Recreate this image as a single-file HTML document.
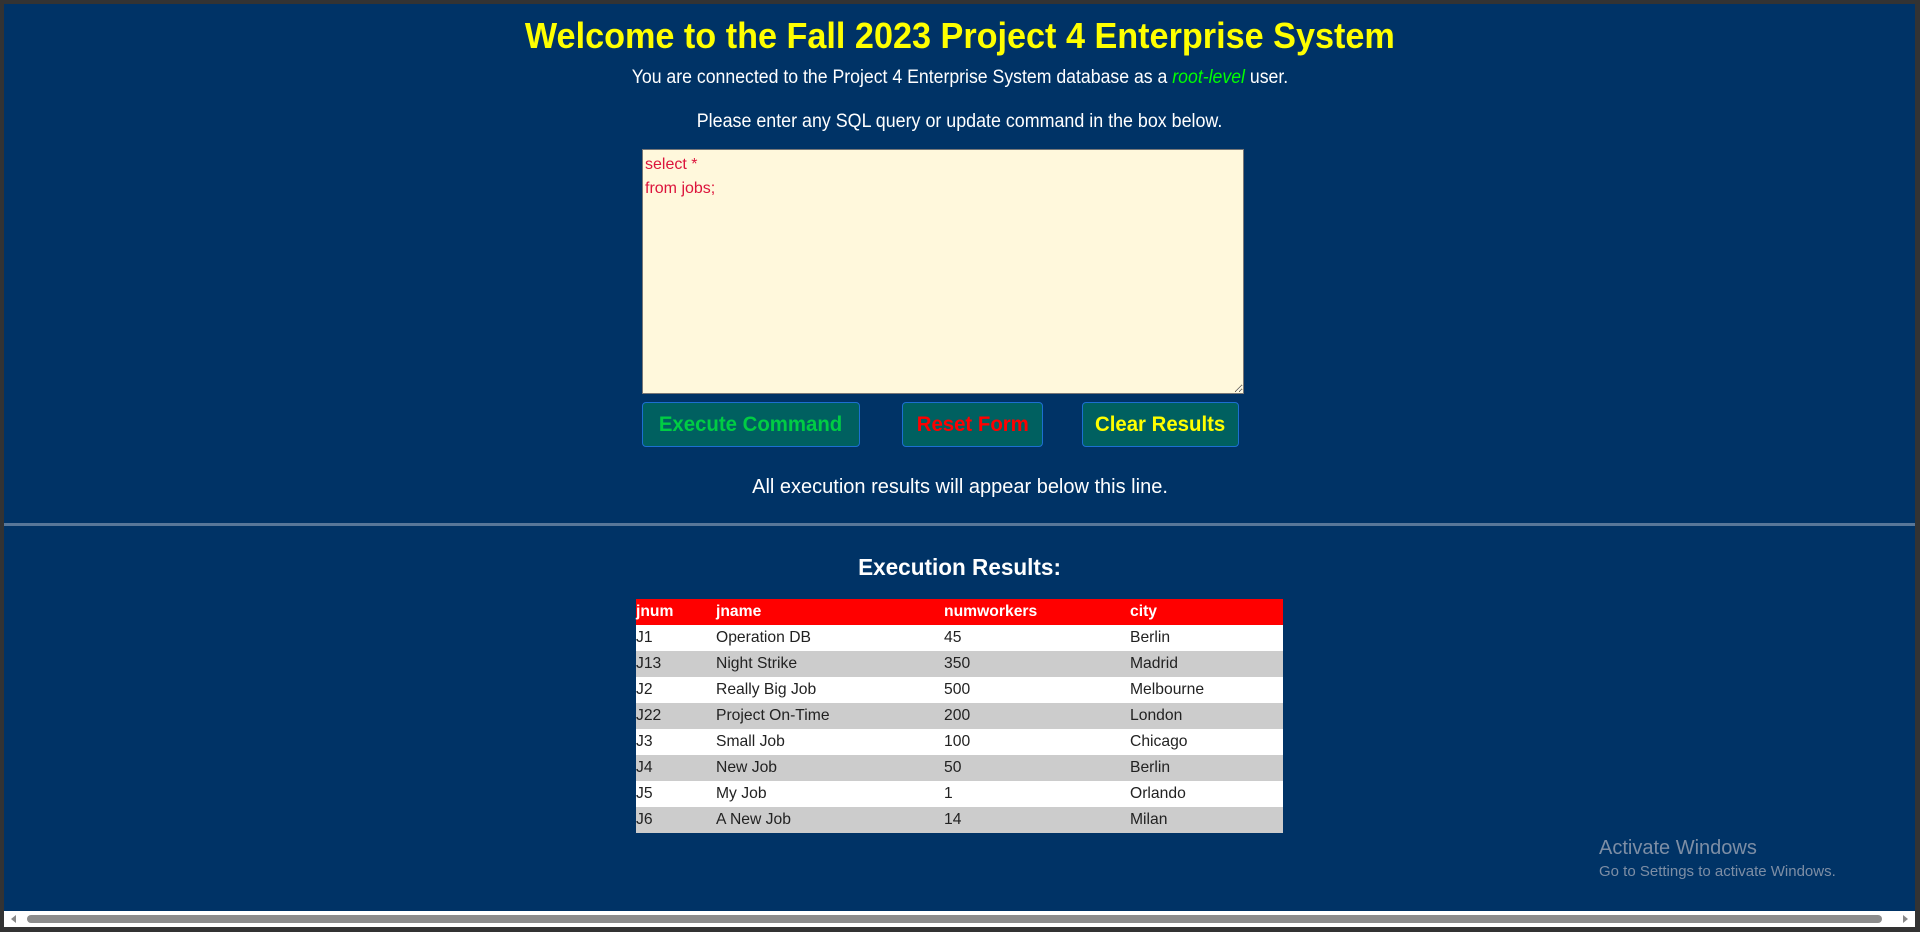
<!DOCTYPE html>
<html><head><meta charset="utf-8"><style>
*{margin:0;padding:0;box-sizing:border-box}
html,body{width:1920px;height:932px;overflow:hidden;background:#333}
body{font-family:"Liberation Sans",Arial,sans-serif;position:relative}
#page{position:absolute;left:4px;top:4px;width:1911px;height:907px;background:#003366}
.c{position:absolute;left:0;width:1920px;text-align:center;white-space:nowrap}
.c span{display:inline-block;transform-origin:center}
h1{font-size:36px;color:#ffff00;font-weight:bold}
.t{color:#fff;font-size:19px}
textarea{position:absolute;left:642px;top:149px;width:602px;height:245px;background:#fff8dc;border:1px solid #777;color:#dc143c;font-family:"Liberation Sans",sans-serif;font-size:16px;line-height:24px;padding:3px 2px;resize:both}
.btn{position:absolute;top:402px;height:45px;background:#006060;border:1px solid #1c6fd1;border-radius:4px;font-weight:bold;font-size:21px;display:flex;align-items:center;justify-content:center;white-space:nowrap}
.btn span{display:inline-block;transform:scaleX(.97)}
hr{position:absolute;left:4px;top:523px;width:1911px;border:0;height:3px;background:#587799}
table{position:absolute;left:636px;top:599px;width:647px;border-collapse:collapse;font-size:16px}
td,th{height:26px;padding:0;text-align:left;white-space:nowrap}
th{background:#ff0000;color:#fff;font-weight:bold}
tr:nth-child(even) td{background:#fff;color:#222}
tr:nth-child(odd) td{background:#ccc;color:#222}
.cell{display:inline-block;transform:scaleX(.98);transform-origin:left}
#sb{position:absolute;left:4px;top:911px;width:1911px;height:16px;background:#fff}
#thumb{position:absolute;left:23px;top:4px;width:1855px;height:8px;background:#8c8c8c;border-radius:4px}
</style></head><body>
<div id="page"></div>
<div class="c" style="top:15px"><h1><span style="transform:scaleX(.95)">Welcome to the Fall 2023 Project 4 Enterprise System</span></h1></div>
<div class="c t" style="top:67px"><span style="transform:scaleX(.93)">You are connected to the Project 4 Enterprise System database as a <i style="color:#00ff00">root-level</i> user.</span></div>
<div class="c t" style="top:111px"><span style="transform:scaleX(.94)">Please enter any SQL query or update command in the box below.</span></div>
<textarea>select *
from jobs;</textarea>
<div class="btn" style="left:642px;width:218px;color:#00cc44"><span>Execute Command</span></div>
<div class="btn" style="left:902px;width:141px;color:#ff0000"><span>Reset Form</span></div>
<div class="btn" style="left:1082px;width:157px;color:#ffff00"><span>Clear Results</span></div>
<div class="c t" style="top:476px;font-size:20px"><span style="transform:scaleX(1)">All execution results will appear below this line.</span></div>
<hr>
<div class="c" style="top:554px;color:#fff;font-weight:bold;font-size:23px"><span style="transform:scaleX(.98)">Execution Results:</span></div>
<table>
<colgroup><col style="width:80px"><col style="width:228px"><col style="width:186px"><col></colgroup>
<tr><th><span class="cell">jnum</span></th><th><span class="cell">jname</span></th><th><span class="cell">numworkers</span></th><th><span class="cell">city</span></th></tr>
<tr><td><span class="cell">J1</span></td><td><span class="cell">Operation DB</span></td><td><span class="cell">45</span></td><td><span class="cell">Berlin</span></td></tr>
<tr><td><span class="cell">J13</span></td><td><span class="cell">Night Strike</span></td><td><span class="cell">350</span></td><td><span class="cell">Madrid</span></td></tr>
<tr><td><span class="cell">J2</span></td><td><span class="cell">Really Big Job</span></td><td><span class="cell">500</span></td><td><span class="cell">Melbourne</span></td></tr>
<tr><td><span class="cell">J22</span></td><td><span class="cell">Project On-Time</span></td><td><span class="cell">200</span></td><td><span class="cell">London</span></td></tr>
<tr><td><span class="cell">J3</span></td><td><span class="cell">Small Job</span></td><td><span class="cell">100</span></td><td><span class="cell">Chicago</span></td></tr>
<tr><td><span class="cell">J4</span></td><td><span class="cell">New Job</span></td><td><span class="cell">50</span></td><td><span class="cell">Berlin</span></td></tr>
<tr><td><span class="cell">J5</span></td><td><span class="cell">My Job</span></td><td><span class="cell">1</span></td><td><span class="cell">Orlando</span></td></tr>
<tr><td><span class="cell">J6</span></td><td><span class="cell">A New Job</span></td><td><span class="cell">14</span></td><td><span class="cell">Milan</span></td></tr>
</table>
<div style="position:absolute;left:1599px;top:837px;color:#7d8ea5;font-size:20px;white-space:nowrap">Activate Windows</div>
<div style="position:absolute;left:1599px;top:863px;color:#7d8ea5;font-size:15px;white-space:nowrap">Go to Settings to activate Windows.</div>
<div id="sb"><div id="thumb"></div>
<svg style="position:absolute;left:6px;top:4px" width="8" height="8"><path d="M6 0L1 4L6 8Z" fill="#888"/></svg>
<svg style="position:absolute;right:6px;top:4px" width="8" height="8"><path d="M2 0L7 4L2 8Z" fill="#888"/></svg>
</div>
</body></html>
